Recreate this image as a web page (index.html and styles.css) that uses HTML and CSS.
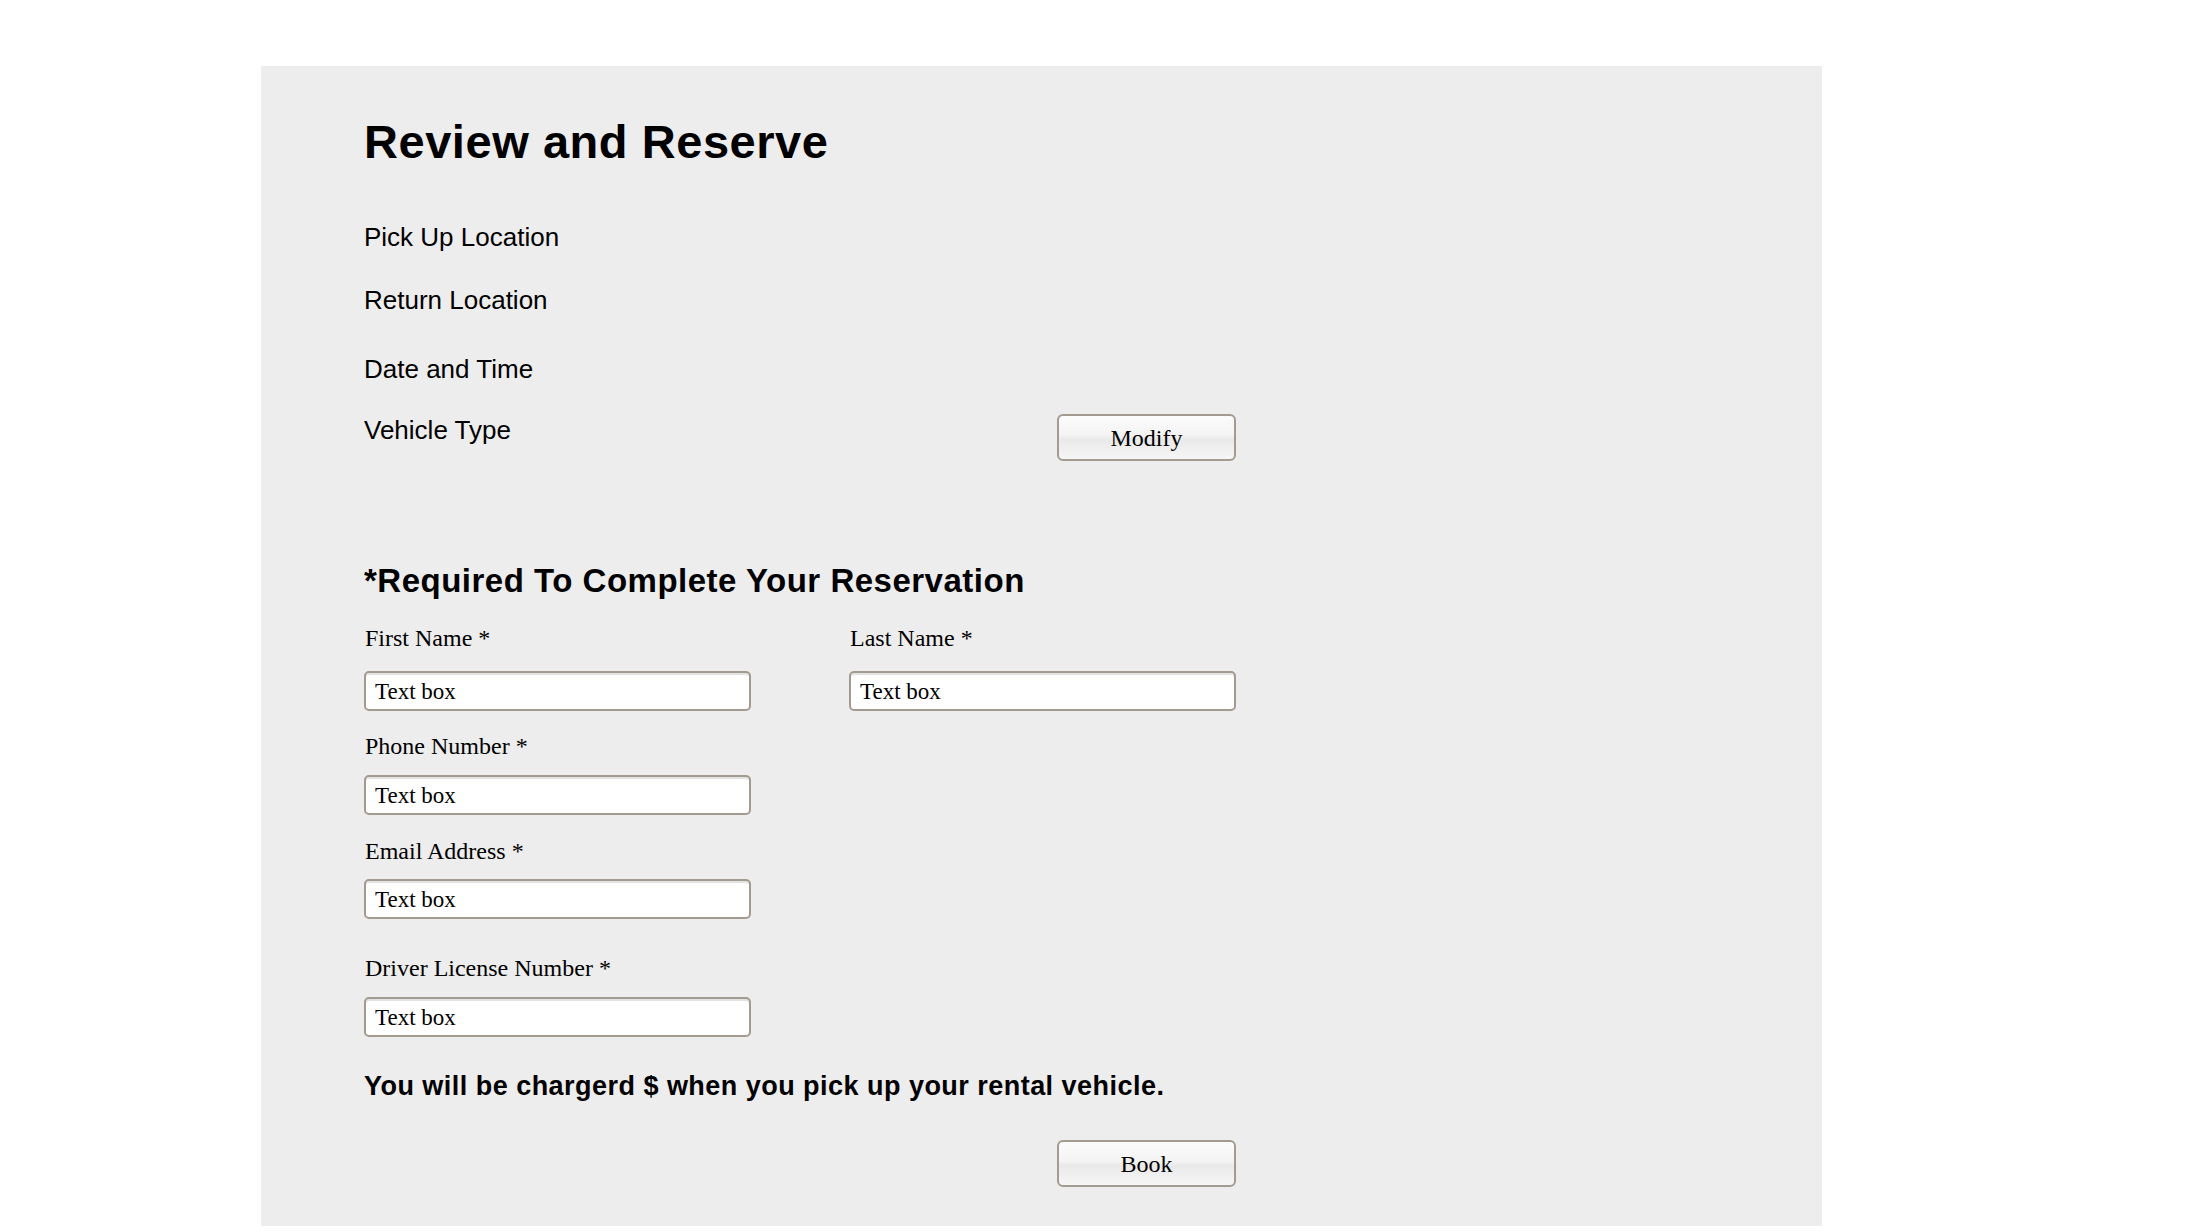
FILE: index.html
```html
<!DOCTYPE html>
<html lang="en">
<head>
<meta charset="utf-8">
<title>Review and Reserve</title>
<link rel="stylesheet" href="styles.css">
</head>
<body>
<main class="panel">
  <div class="content">
    <h1 class="title">Review and Reserve</h1>

    <div class="summary">
      <div class="summary-row row-pickup">Pick Up Location</div>
      <div class="summary-row row-return">Return Location</div>
      <div class="summary-row row-date">Date and Time</div>
      <div class="vehicle-row">
        <div class="summary-row row-vehicle">Vehicle Type</div>
        <button class="btn" type="button">Modify</button>
      </div>
    </div>

    <h2 class="req-title">*Required To Complete Your Reservation</h2>

    <form class="form">
      <div class="field-pair">
        <div class="field">
          <label class="label label-first">First Name *</label>
          <input class="input input-first" type="text" value="Text box">
        </div>
        <div class="field">
          <label class="label label-first">Last Name *</label>
          <input class="input input-first" type="text" value="Text box">
        </div>
      </div>
      <div class="field">
        <label class="label label-phone">Phone Number *</label>
        <input class="input input-phone" type="text" value="Text box">
      </div>
      <div class="field">
        <label class="label label-email">Email Address *</label>
        <input class="input input-email" type="text" value="Text box">
      </div>
      <div class="field">
        <label class="label label-driver">Driver License Number *</label>
        <input class="input input-driver" type="text" value="Text box">
      </div>

      <p class="charge">You will be chargerd $ when you pick up your rental vehicle.</p>

      <div class="book-row">
        <button class="btn" type="button">Book</button>
      </div>
    </form>
  </div>
</main>
</body>
</html>
```

FILE: styles.css
```css
html, body {
  margin: 0;
  padding: 0;
  background: #ffffff;
}

body {
  padding-top: 66px;
  padding-left: 261px;
  color: #000;
}

.panel {
  width: 1561px;
  height: 1160px;
  box-sizing: border-box;
  background: #ededed;
  padding: 48px 0 0 103px;
}

.content {
  width: 872px;
}

.title {
  margin: 0;
  font-family: "Liberation Sans", Arial, Helvetica, sans-serif;
  font-weight: bold;
  font-size: 47px;
  line-height: 56px;
  letter-spacing: 0.55px;
}

.summary-row {
  font-family: "Liberation Sans", Arial, Helvetica, sans-serif;
  font-size: 26px;
  line-height: 30px;
}

.row-pickup { margin-top: 52px; }
.row-return { margin-top: 33px; }
.row-date { margin-top: 39px; }

.vehicle-row {
  margin-top: 30px;
  display: flex;
  align-items: flex-start;
}

.row-vehicle {
  margin-top: 1px;
}

.btn {
  margin-left: auto;
  width: 179px;
  height: 47px;
  box-sizing: border-box;
  border: 2px solid #a39b90;
  border-radius: 6px;
  background: linear-gradient(#fcfcfc 0%, #f3f3f3 45%, #e9e9e9 55%, #f6f6f6 100%);
  font-family: "Liberation Serif", "Times New Roman", serif;
  font-size: 24px;
  color: #000;
  padding: 2px 0 0;
  display: flex;
  align-items: center;
  justify-content: center;
}

.req-title {
  margin: 101px 0 0;
  font-family: "Liberation Sans", Arial, Helvetica, sans-serif;
  font-weight: bold;
  font-size: 33px;
  line-height: 38px;
  letter-spacing: 0.5px;
}

.form {
  margin: 0;
}

.field-pair {
  display: flex;
  gap: 98px;
}

.field {
  display: flex;
  flex-direction: column;
  width: 387px;
}

.label {
  display: block;
  font-family: "Liberation Serif", "Times New Roman", serif;
  font-size: 24px;
  line-height: 28px;
  padding-left: 1px;
}

.label-first { margin-top: 24px; }
.label-phone { margin-top: 21px; }
.label-email { margin-top: 22px; }
.label-driver { margin-top: 35px; }

.input {
  display: block;
  width: 387px;
  height: 40px;
  box-sizing: border-box;
  border: 2px solid #a39b90;
  border-radius: 5px;
  background: #fff;
  box-shadow: inset 0 2px 0 #e2e2e2;
  padding: 1px 9px 0;
  font-family: "Liberation Serif", "Times New Roman", serif;
  font-size: 23px;
  color: #000;
  outline: none;
}

.input-first { margin-top: 19px; }
.input-phone { margin-top: 15px; }
.input-email { margin-top: 14px; }
.input-driver { margin-top: 15px; }

.charge {
  margin: 33px 0 0;
  font-family: "Liberation Sans", Arial, Helvetica, sans-serif;
  font-weight: bold;
  font-size: 27px;
  line-height: 32px;
  letter-spacing: 0.47px;
  white-space: nowrap;
}

.book-row {
  margin-top: 38px;
  display: flex;
}
```
